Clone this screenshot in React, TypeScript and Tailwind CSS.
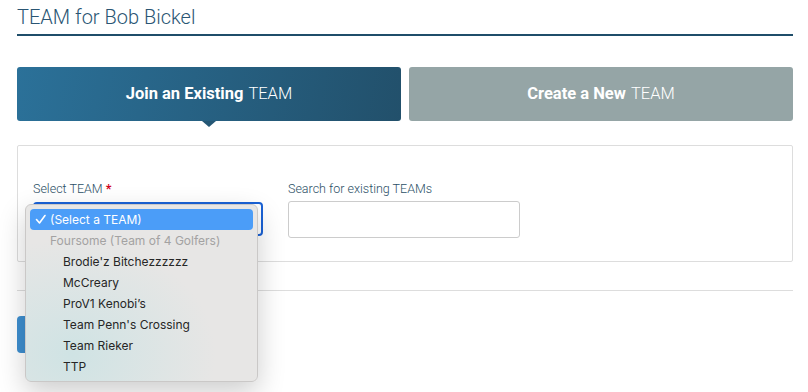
import React from "react";

const teams = ["Brodie'z Bitchezzzzzz", "McCreary", "ProV1 Kenobi’s", "Team Penn's Crossing", "Team Rieker", "TTP"];

function Dropdown() {
  return (
    <div className="absolute left-[-8px] top-[2px] w-[233px] rounded-[6px] border border-[#cac8c7] bg-[radial-gradient(ellipse_at_20%_85%,#cfe3e4_0%,#e7e6e5_55%)] shadow-[0_10px_28px_rgba(0,0,0,0.2)] px-[4px] py-[4px] font-['Inter',sans-serif] text-[12px] text-[#262626] z-10">
      <div className="flex items-center h-[21px] rounded-[4px] bg-[#4b9df8] text-white pl-[5px]">
        <svg width="15" height="11" viewBox="0 0 15 11" className="shrink-0">
          <path d="M1.5 5.5 L4.5 9 L10 1.5" fill="none" stroke="white" strokeWidth="1.6" strokeLinecap="round" strokeLinejoin="round" />
        </svg>
        <span>(Select a TEAM)</span>
      </div>
      <div className="flex items-center h-[21px] pl-[20px] text-[#a3a2a2]">Foursome (Team of 4 Golfers)</div>
      {teams.map((t) => (
        <div key={t} className="flex items-center h-[21px] pl-[33px]">
          {t}
        </div>
      ))}
    </div>
  );
}

export default function App() {
  return (
    <div className="w-[808px] h-[392px] overflow-hidden bg-white pl-[17px] pr-[15px] font-['Roboto',sans-serif]">
      <div className="pt-[5px] border-b-2 border-[#1f4e6a] h-[36px]">
        <h1 className="text-[20px] font-light text-[#2a5573] leading-[24px]">TEAM for Bob Bickel</h1>
      </div>

      <div className="mt-[31px] flex gap-[8px]">
        <div className="relative flex-1 h-[54px] rounded-[3px] bg-[linear-gradient(100deg,#2b7199_0%,#22506b_100%)] flex items-center justify-center text-white text-[16.5px]">
          <span className="font-bold">Join an Existing</span>
          <span className="font-light ml-[5px]">TEAM</span>
          <span className="absolute left-1/2 -translate-x-1/2 top-full w-0 h-0 border-l-[7px] border-r-[7px] border-t-[6px] border-l-transparent border-r-transparent border-t-[#245775]" />
        </div>
        <div className="flex-1 h-[54px] rounded-[3px] bg-[#95a5a6] flex items-center justify-center text-white text-[16.5px]">
          <span className="font-bold">Create a New</span>
          <span className="font-light ml-[5px]">TEAM</span>
        </div>
      </div>

      <div className="mt-[24px] h-[117px] border border-[#dddddd] rounded-[2px] pl-[15px] pt-[35px] flex gap-[25px]">
        <div className="flex flex-col w-[230px]">
          <label className="text-[12.5px] font-light text-[#2c4f66] leading-[16px]">
            Select TEAM <span className="text-[#d0021b] font-bold">*</span>
          </label>
          <div className="relative mt-[5px]">
            <div className="h-[34px] rounded-[4px] border-2 border-[#1a62d6]" />
            <Dropdown />
          </div>
        </div>
        <div className="flex flex-col w-[232px]">
          <label className="text-[12.5px] font-light text-[#2c4f66] leading-[16px]">Search for existing TEAMs</label>
          <div className="mt-[4px] h-[37px] rounded-[3px] border border-[#cccccc] bg-white" />
        </div>
      </div>

      <div className="mt-[28px] border-t border-[#dddddd]" />

      <div className="mt-[25px]">
        <div className="w-[120px] h-[37px] rounded-[4px] bg-[#3e8fd0]" />
      </div>
    </div>
  );
}
